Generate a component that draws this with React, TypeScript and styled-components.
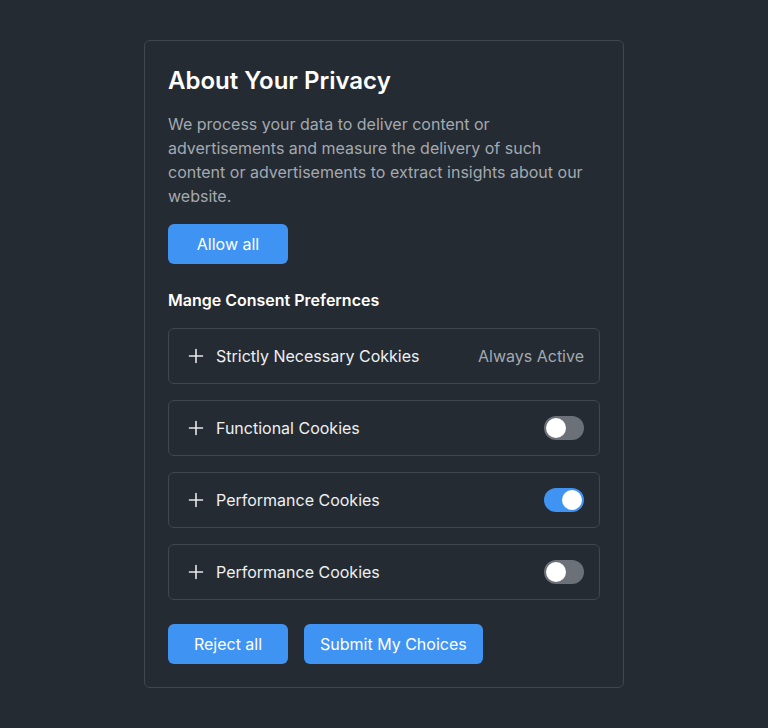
import styled, { createGlobalStyle } from "styled-components"

const Global = createGlobalStyle`
  html, body {
    margin: 0;
    background: #252b32;
  }
  body {
    font-family: Inter, "Noto Sans", sans-serif;
    -webkit-font-smoothing: antialiased;
  }
`

const Page = styled.div`
  min-height: 728px;
  display: flex;
  justify-content: center;
  align-items: flex-start;
  padding-top: 40px;
  box-sizing: border-box;
`

const Card = styled.div`
  width: 480px;
  box-sizing: border-box;
  padding: 23px;
  border: 1px solid #41474f;
  border-radius: 6px;
  display: flex;
  flex-direction: column;
`

const Title = styled.h2`
  margin: 0;
  font-size: 24px;
  line-height: 34px;
  font-weight: 600;
  color: #ffffff;
`

const Text = styled.p`
  margin: 14px 0 0;
  font-size: 16px;
  line-height: 24px;
  color: #a3a9b0;
`

const Button = styled.button`
  height: 40px;
  padding: 0 16px;
  min-width: 120px;
  border: none;
  border-radius: 6px;
  background: #3f93f3;
  color: #ffffff;
  font-family: inherit;
  font-size: 16px;
  cursor: pointer;
`

const AllowButton = styled(Button)`
  margin-top: 16px;
  align-self: flex-start;
`

const Subheading = styled.h3`
  margin: 24px 0 0;
  font-size: 16px;
  line-height: 24px;
  font-weight: 600;
  color: #ffffff;
`

const List = styled.div`
  margin-top: 16px;
  display: flex;
  flex-direction: column;
  gap: 16px;
`

const Row = styled.div`
  height: 56px;
  box-sizing: border-box;
  border: 1px solid #41474f;
  border-radius: 6px;
  padding: 0 15px 0 19px;
  display: flex;
  align-items: center;
  gap: 12px;
`

const Label = styled.span`
  flex: 1;
  font-size: 16px;
  color: #eef0f2;
`

const Status = styled.span`
  font-size: 16px;
  color: #a3a9b0;
`

const Track = styled.span<{ $on?: boolean }>`
  width: 40px;
  height: 24px;
  border-radius: 12px;
  background: ${(p) => (p.$on ? "#3f93f3" : "#6b7079")};
  display: flex;
  align-items: center;
  justify-content: ${(p) => (p.$on ? "flex-end" : "flex-start")};
  padding: 0 2px;
  box-sizing: border-box;
`

const Knob = styled.span`
  width: 20px;
  height: 20px;
  border-radius: 50%;
  background: #ffffff;
`

const Actions = styled.div`
  margin-top: 24px;
  display: flex;
  gap: 16px;
`

const Plus = () => (
  <svg width="16" height="16" viewBox="0 0 16 16" fill="none" stroke="#e6e8eb" strokeWidth="1.6" strokeLinecap="round">
    <path d="M8 1.5v13M1.5 8h13" />
  </svg>
)

const rows: { label: string; status?: string; on?: boolean }[] = [
  { label: "Strictly Necessary Cokkies", status: "Always Active" },
  { label: "Functional Cookies", on: false },
  { label: "Performance Cookies", on: true },
  { label: "Performance Cookies", on: false },
]

const App = () => {
  return (
    <>
      <Global />
      <Page>
        <Card>
          <Title>About Your Privacy</Title>
          <Text>
            We process your data to deliver content or advertisements and measure the delivery of such
            content or advertisements to extract insights about our website.
          </Text>
          <AllowButton>Allow all</AllowButton>
          <Subheading>Mange Consent Prefernces</Subheading>
          <List>
            {rows.map((r, i) => (
              <Row key={i}>
                <Plus />
                <Label>{r.label}</Label>
                {r.status ? (
                  <Status>{r.status}</Status>
                ) : (
                  <Track $on={r.on}>
                    <Knob />
                  </Track>
                )}
              </Row>
            ))}
          </List>
          <Actions>
            <Button>Reject all</Button>
            <Button>Submit My Choices</Button>
          </Actions>
        </Card>
      </Page>
    </>
  )
}

export default App
